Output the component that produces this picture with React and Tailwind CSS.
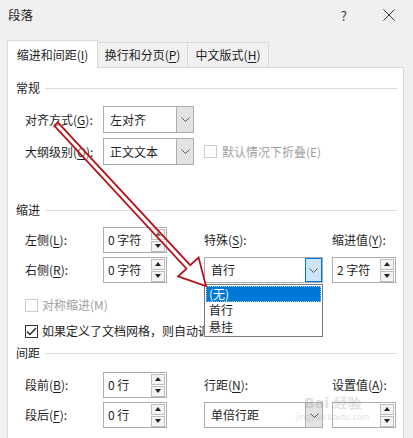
import React from "react";

// Underlined access key inside a label, e.g. 对齐方式(G)
const Key = ({ children }) => (
  <span className="underline decoration-1 underline-offset-2">{children}</span>
);

const Chevron = () => (
  <svg width="9" height="5" viewBox="0 0 9 5" fill="none">
    <path d="M0.5 0.5 L4.5 4.5 L8.5 0.5" stroke="#555" strokeWidth="1" />
  </svg>
);

const Triangle = ({ up }) => (
  <svg width="6" height="4" viewBox="0 0 6 4">
    <path d={up ? "M0 4 L3 0 L6 4 Z" : "M0 0 L3 4 L6 0 Z"} fill="#222" />
  </svg>
);

const Heading = ({ children, className = "" }) => (
  <div className={`flex h-[20px] items-center pl-[8px] pr-[6px] ${className}`}>
    <span>{children}</span>
    <span className="ml-[5px] h-px flex-1 bg-[#dcdcdc]" />
  </div>
);

const SpinBox = ({ value }) => (
  <div className="flex h-[26px] w-[64px] items-center border border-[#adadad] bg-white">
    <span className="flex-1 pl-[4px]">{value}</span>
    <div className="mr-px flex flex-col gap-px">
      <span className="flex h-[11px] w-[14px] items-center justify-center border border-[#bdbdbd] bg-[#f4f4f4]">
        <Triangle up />
      </span>
      <span className="flex h-[11px] w-[14px] items-center justify-center border border-[#bdbdbd] bg-[#f4f4f4]">
        <Triangle />
      </span>
    </div>
  </div>
);

const Select = ({ value, wide, open }) => (
  <div
    className={`flex items-stretch border border-[#adadad] bg-white ${
      wide ? "h-[26px] w-[119px]" : "h-[27px] w-[91px]"
    }`}
  >
    <span className="flex flex-1 items-center pl-[6px]">{value}</span>
    <span
      className={`flex w-[17px] items-center justify-center border-l ${
        open ? "border border-[#0078d7] bg-[#cce4f7]" : "border-[#adadad] bg-[#e3e3e3]"
      }`}
    >
      <Chevron />
    </span>
  </div>
);

const Checkbox = ({ checked, disabled }) => (
  <span
    className={`flex h-[13px] w-[13px] shrink-0 items-center justify-center border bg-white ${
      disabled ? "border-[#cccccc]" : "border-[#333333]"
    }`}
  >
    {checked && (
      <svg width="11" height="9" viewBox="0 0 11 9" fill="none">
        <path d="M1 4.5 L4 7.5 L10 1" stroke="#222" strokeWidth="1.3" />
      </svg>
    )}
  </span>
);

const Label = ({ children, className = "" }) => (
  <span className={`flex w-[78px] shrink-0 items-center ${className}`}>{children}</span>
);

export default function App() {
  return (
    <div className="relative h-[438px] w-[413px] overflow-hidden bg-[#f0f0f0] font-['Noto_Sans_CJK_SC','Microsoft_YaHei',sans-serif] text-[12px] leading-none text-[#1e1e1e]">
      {/* title bar */}
      <div className="flex h-[30px] items-center pl-[8px]">
        <span className="text-[12.5px]">段落</span>
        <span className="ml-auto text-[13px] text-[#333]">?</span>
        <svg className="ml-[36px] mr-[18px]" width="12" height="12" viewBox="0 0 12 12">
          <path d="M0.5 0.5 L11.5 11.5 M11.5 0.5 L0.5 11.5" stroke="#333" strokeWidth="1" />
        </svg>
      </div>

      {/* tabs */}
      <div className="mt-[10px] flex items-end pl-[7px]">
        <div className="relative z-10 -mb-px flex h-[28px] w-[91px] items-center justify-center border border-b-0 border-[#d9d9d9] bg-white">
          缩进和间距(<Key>I</Key>)
        </div>
        <div className="flex h-[25px] w-[90px] items-center justify-center border border-b-0 border-l-0 border-[#d9d9d9]">
          换行和分页(<Key>P</Key>)
        </div>
        <div className="flex h-[25px] w-[81px] items-center justify-center border border-b-0 border-l-0 border-[#d9d9d9]">
          中文版式(<Key>H</Key>)
        </div>
      </div>

      {/* tab page */}
      <div className="ml-[7px] h-[400px] w-[397px] border border-[#d9d9d9] bg-white">
        <Heading className="mt-[10px]">常规</Heading>

        <div className="mt-[8px] flex pl-[17px]">
          <Label>
            对齐方式(<Key>G</Key>):
          </Label>
          <Select value="左对齐" />
        </div>
        <div className="mt-[5px] flex pl-[17px]">
          <Label>
            大纲级别(<Key>O</Key>):
          </Label>
          <Select value="正文文本" />
          <div className="ml-[10px] flex items-center gap-[5px] text-[#a0a0a0]">
            <Checkbox disabled />
            <span>默认情况下折叠(E)</span>
          </div>
        </div>

        <Heading className="mt-[35px]">缩进</Heading>

        <div className="mt-[7px] flex">
          <div className="flex flex-col gap-[4px] pl-[17px]">
            <div className="flex">
              <Label>
                左侧(<Key>L</Key>):
              </Label>
              <SpinBox value="0 字符" />
            </div>
            <div className="flex">
              <Label>
                右侧(<Key>R</Key>):
              </Label>
              <SpinBox value="0 字符" />
            </div>
          </div>
          <div className="ml-[37px] flex flex-col gap-[4px]">
            <span className="flex h-[26px] items-center">
              特殊(<Key>S</Key>):
            </span>
            <Select value="首行" wide open />
          </div>
          <div className="ml-[9px] flex flex-col gap-[4px]">
            <span className="flex h-[26px] items-center">
              缩进值(<Key>Y</Key>):
            </span>
            <SpinBox value="2 字符" />
          </div>
        </div>

        <div className="mt-[13px] flex h-[18px] items-center gap-[4px] pl-[17px] text-[#a0a0a0]">
          <Checkbox disabled />
          <span>对称缩进(M)</span>
        </div>
        {/* the open combo list sits over the rest of this line */}
        <div className="mt-[8px] flex h-[18px] w-[196px] items-center gap-[4px] overflow-hidden whitespace-nowrap pl-[17px]">
          <Checkbox checked />
          <span>如果定义了文档网格，则自动调整右缩进(D)</span>
        </div>

        <Heading className="mt-[3px]">间距</Heading>

        <div className="mt-[9px] flex">
          <div className="flex flex-col gap-[4px] pl-[17px]">
            <div className="flex">
              <Label>
                段前(<Key>B</Key>):
              </Label>
              <SpinBox value="0 行" />
            </div>
            <div className="flex">
              <Label>
                段后(<Key>F</Key>):
              </Label>
              <SpinBox value="0 行" />
            </div>
          </div>
          <div className="ml-[37px] flex flex-col gap-[4px]">
            <span className="flex h-[26px] items-center">
              行距(<Key>N</Key>):
            </span>
            <Select value="单倍行距" wide />
          </div>
          <div className="ml-[9px] flex flex-col gap-[4px]">
            <span className="flex h-[26px] items-center">
              设置值(<Key>A</Key>):
            </span>
            <SpinBox value="" />
          </div>
        </div>
      </div>

      {/* open list of the 特殊 combo */}
      <div className="absolute left-[204px] top-[284px] flex h-[53px] w-[119px] flex-col border border-[#7a7a7a] bg-white p-px">
        <span className="flex h-[16px] items-center border border-dotted border-[#9cc7ee] bg-[#0078d7] pl-[2px] text-white">
          (无)
        </span>
        <span className="flex h-[17px] items-center pl-[3px]">首行</span>
        <span className="flex h-[17px] items-center pl-[3px]">悬挂</span>
      </div>

      {/* site watermark */}
      <div className="pointer-events-none absolute left-[296px] top-[396px] flex flex-col items-center text-[#8a8a8a] opacity-25">
        <span className="font-['DejaVu_Sans',sans-serif] text-[14px] font-bold">Bai 经验</span>
        <span className="mt-[4px] font-['DejaVu_Sans',sans-serif] text-[8px]">jingyan.baidu.com</span>
      </div>

      {/* red callout arrow */}
      <svg className="pointer-events-none absolute left-0 top-0" width="413" height="438" viewBox="0 0 413 438">
        <polygon
          points="54.2,125.7 186.5,268.6 178.1,276.4 206,286 198.6,257.4 190.2,265.2 57.8,122.3"
          fill="rgba(255,255,255,0.35)"
          stroke="#b3161c"
          strokeWidth="1.8"
          strokeLinejoin="miter"
        />
      </svg>
    </div>
  );
}
